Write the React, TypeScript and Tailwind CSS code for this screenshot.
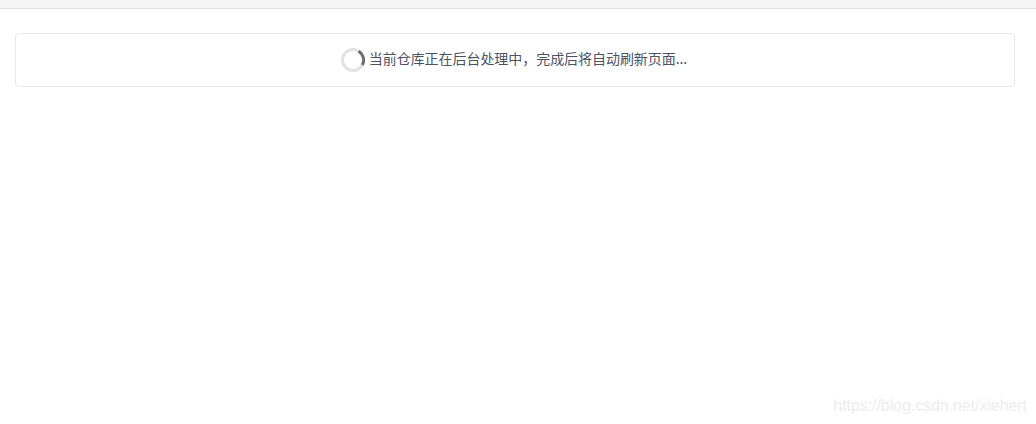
export default function App() {
  return (
    <div className="relative w-[1036px] h-[424px] overflow-hidden bg-white font-['Inter','Noto_Sans_CJK_SC',sans-serif]">
      <div className="h-[9px] bg-[#f5f5f5] border-b border-[#e0e0e0]" />
      <div className="mt-6 ml-[15px] w-[1000px] h-[54px] rounded border border-[#e6e8ec] flex items-center justify-center gap-1 pr-[2px]">
        <svg width="24" height="24" viewBox="0 0 24 24" className="shrink-0">
          <circle cx="12" cy="12" r="10.5" fill="none" stroke="#e2e2e2" strokeWidth="3" />
          <path d="M17.6 3.2A10.5 10.5 0 0 1 21.4 17" fill="none" stroke="#6f6f6f" strokeWidth="3" />
        </svg>
        <span className="text-[14px] leading-5 -mt-1 tracking-[-0.05px] text-[#4b5264] font-['Noto_Sans_CJK_SC',sans-serif]">当前仓库正在后台处理中，完成后将自动刷新页面...</span>
      </div>
      <span className="absolute right-[9px] bottom-[6px] text-[16px] tracking-[-0.07px] text-[#ededed] font-['Liberation_Sans',sans-serif]">https://blog.csdn.net/xiehert</span>
    </div>
  );
}
